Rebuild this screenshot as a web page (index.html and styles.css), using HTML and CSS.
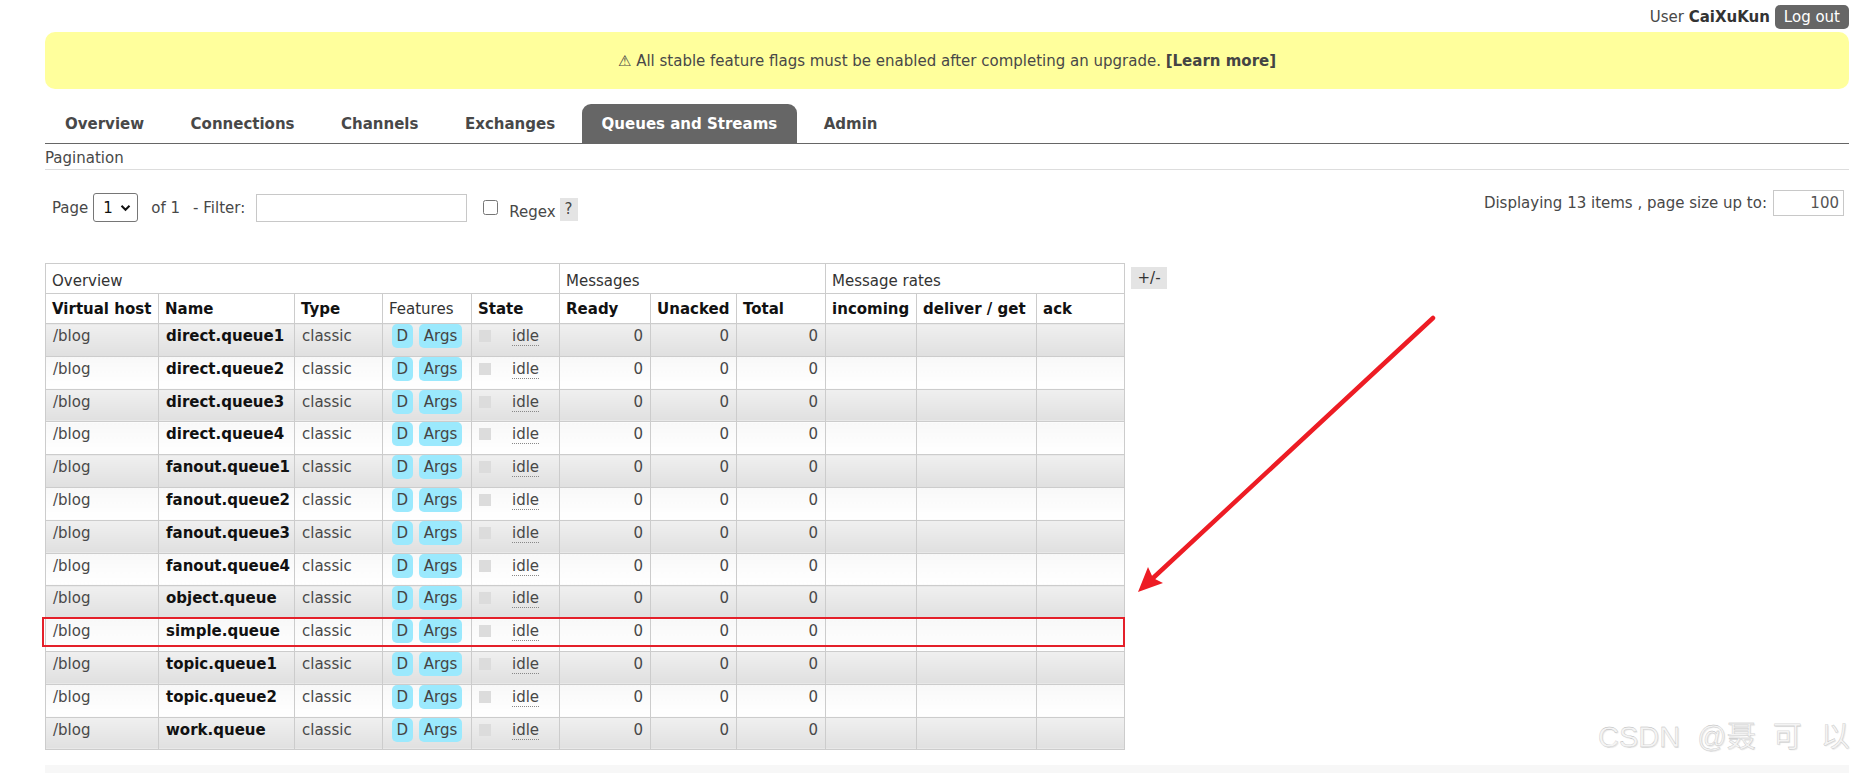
FILE: index.html
```html
<!DOCTYPE html>
<html>
<head>
<meta charset="utf-8">
<title>RabbitMQ Management</title>
<link rel="stylesheet" href="styles.css">
</head>
<body>
<div class="page">
  <div class="topbar">
    <span class="user">User <b>CaiXuKun</b></span>
    <span class="logout">Log out</span>
  </div>
  <div class="banner">⚠ All stable feature flags must be enabled after completing an upgrade.&nbsp;<b>[Learn more]</b></div>
  <ul class="tabs">
    <li>Overview</li>
    <li>Connections</li>
    <li>Channels</li>
    <li>Exchanges</li>
    <li class="selected">Queues and Streams</li>
    <li>Admin</li>
  </ul>
  <div class="section-title">Pagination</div>
  <div class="pager">
    <div class="pager-left">
      <span class="lbl-page">Page</span>
      <span class="select">1<svg class="chev" width="11" height="8" viewBox="0 0 11 8"><path d="M1.5 1.8 L5.5 5.8 L9.5 1.8" fill="none" stroke="#111" stroke-width="2"/></svg></span>
      <span class="lbl-of">of 1</span>
      <span class="lbl-filter">- Filter:</span>
      <input class="filter" type="text">
      <input class="cb" type="checkbox">
      <span class="regex">Regex <span class="help">?</span></span>
    </div>
    <div class="pager-right">
      <span>Displaying 13 items , page size up to:</span>
      <input class="size" type="text" value="100">
    </div>
  </div>
  <div class="table-wrap">
    <table class="list">
      <colgroup>
        <col class="w113"><col class="w136"><col class="w88"><col class="w89"><col class="w88">
        <col class="w91"><col class="w86"><col class="w89">
        <col class="w91"><col class="w120"><col class="w88">
      </colgroup>
      <thead>
        <tr class="group">
          <th colspan="5">Overview</th>
          <th colspan="3">Messages</th>
          <th colspan="3">Message rates</th>
        </tr>
        <tr class="cols">
          <th>Virtual host</th><th>Name</th><th>Type</th><th class="plain">Features</th><th>State</th>
          <th>Ready</th><th>Unacked</th><th>Total</th>
          <th>incoming</th><th>deliver / get</th><th>ack</th>
        </tr>
      </thead>
      <tbody>
        <tr class="alt1"><td>/blog</td><td class="name">direct.queue1</td><td>classic</td><td><span class="badge">D</span> <span class="badge">Args</span></td><td><span class="sq"></span><span class="idle">idle</span></td><td class="r">0</td><td class="r">0</td><td class="r">0</td><td></td><td></td><td></td></tr>
        <tr class="alt2"><td>/blog</td><td class="name">direct.queue2</td><td>classic</td><td><span class="badge">D</span> <span class="badge">Args</span></td><td><span class="sq"></span><span class="idle">idle</span></td><td class="r">0</td><td class="r">0</td><td class="r">0</td><td></td><td></td><td></td></tr>
        <tr class="alt1"><td>/blog</td><td class="name">direct.queue3</td><td>classic</td><td><span class="badge">D</span> <span class="badge">Args</span></td><td><span class="sq"></span><span class="idle">idle</span></td><td class="r">0</td><td class="r">0</td><td class="r">0</td><td></td><td></td><td></td></tr>
        <tr class="alt2"><td>/blog</td><td class="name">direct.queue4</td><td>classic</td><td><span class="badge">D</span> <span class="badge">Args</span></td><td><span class="sq"></span><span class="idle">idle</span></td><td class="r">0</td><td class="r">0</td><td class="r">0</td><td></td><td></td><td></td></tr>
        <tr class="alt1"><td>/blog</td><td class="name">fanout.queue1</td><td>classic</td><td><span class="badge">D</span> <span class="badge">Args</span></td><td><span class="sq"></span><span class="idle">idle</span></td><td class="r">0</td><td class="r">0</td><td class="r">0</td><td></td><td></td><td></td></tr>
        <tr class="alt2"><td>/blog</td><td class="name">fanout.queue2</td><td>classic</td><td><span class="badge">D</span> <span class="badge">Args</span></td><td><span class="sq"></span><span class="idle">idle</span></td><td class="r">0</td><td class="r">0</td><td class="r">0</td><td></td><td></td><td></td></tr>
        <tr class="alt1"><td>/blog</td><td class="name">fanout.queue3</td><td>classic</td><td><span class="badge">D</span> <span class="badge">Args</span></td><td><span class="sq"></span><span class="idle">idle</span></td><td class="r">0</td><td class="r">0</td><td class="r">0</td><td></td><td></td><td></td></tr>
        <tr class="alt2"><td>/blog</td><td class="name">fanout.queue4</td><td>classic</td><td><span class="badge">D</span> <span class="badge">Args</span></td><td><span class="sq"></span><span class="idle">idle</span></td><td class="r">0</td><td class="r">0</td><td class="r">0</td><td></td><td></td><td></td></tr>
        <tr class="alt1"><td>/blog</td><td class="name">object.queue</td><td>classic</td><td><span class="badge">D</span> <span class="badge">Args</span></td><td><span class="sq"></span><span class="idle">idle</span></td><td class="r">0</td><td class="r">0</td><td class="r">0</td><td></td><td></td><td></td></tr>
        <tr class="alt2"><td>/blog</td><td class="name">simple.queue</td><td>classic</td><td><span class="badge">D</span> <span class="badge">Args</span></td><td><span class="sq"></span><span class="idle">idle</span></td><td class="r">0</td><td class="r">0</td><td class="r">0</td><td></td><td></td><td></td></tr>
        <tr class="alt1"><td>/blog</td><td class="name">topic.queue1</td><td>classic</td><td><span class="badge">D</span> <span class="badge">Args</span></td><td><span class="sq"></span><span class="idle">idle</span></td><td class="r">0</td><td class="r">0</td><td class="r">0</td><td></td><td></td><td></td></tr>
        <tr class="alt2"><td>/blog</td><td class="name">topic.queue2</td><td>classic</td><td><span class="badge">D</span> <span class="badge">Args</span></td><td><span class="sq"></span><span class="idle">idle</span></td><td class="r">0</td><td class="r">0</td><td class="r">0</td><td></td><td></td><td></td></tr>
        <tr class="alt1"><td>/blog</td><td class="name">work.queue</td><td>classic</td><td><span class="badge">D</span> <span class="badge">Args</span></td><td><span class="sq"></span><span class="idle">idle</span></td><td class="r">0</td><td class="r">0</td><td class="r">0</td><td></td><td></td><td></td></tr>
      </tbody>
    </table>
    <span class="plus-minus">+/-</span>
    <div class="highlight"></div>
  </div>
  <div class="footer-band"></div>
  <svg class="arrow" width="1869" height="773" viewBox="0 0 1869 773">
    <line x1="1433" y1="318" x2="1152" y2="579" stroke="#ed1c24" stroke-width="4.5" stroke-linecap="round"/>
    <polygon points="1138,592 1148,567 1153,578 1163,583" fill="#ed1c24"/>
  </svg>
  <div class="watermark"><span>CSDN</span> <span>@聂</span> <span>可</span> <span class="wm-last">以</span></div>
</div>
</body>
</html>
```

FILE: styles.css
```css
* { box-sizing: border-box; }
html, body { margin: 0; padding: 0; background: #fff; }
body {
  font-family: "DejaVu Sans", Verdana, sans-serif;
  font-size: 15px;
  color: #484848;
  overflow: hidden;
}
.page {
  position: relative;
  padding: 0 20px 0 45px;
  height: 773px;
}

/* top bar */
.topbar {
  height: 32px;
  display: flex;
  justify-content: flex-end;
  align-items: center;
  gap: 5px;
  padding-top: 1px;
}
.user b { color: #333; }
.logout {
  background: #666;
  color: #fff;
  border-radius: 5px;
  height: 24px;
  line-height: 24px;
  padding: 0 9px;
}

/* banner */
.banner {
  height: 57px;
  background: #ffff9c;
  border-radius: 10px;
  display: flex;
  align-items: center;
  justify-content: center;
  padding-top: 1px;
}
.banner b { color: #444; }

/* tabs */
.tabs {
  list-style: none;
  margin: 15px 0 0 0;
  padding: 0;
  display: flex;
  border-bottom: 1px solid #666;
}
.tabs li {
  height: 39px;
  display: flex;
  align-items: center;
  padding: 0 19.5px 0 20px;
  margin-right: 7px;
  font-weight: bold;
  color: #484848;
  padding-top: 1px;
}
.tabs li.selected {
  background: #666;
  color: #fff;
  border-radius: 9px 9px 0 0;
}

.section-title {
  padding: 5px 0 2px 0;
  line-height: 18px;
  border-bottom: 1px solid #ddd;
}

/* pager */
.pager {
  display: flex;
  justify-content: space-between;
  align-items: flex-start;
}
.pager-left {
  margin-top: 23px;
  display: flex;
  align-items: center;
  height: 29px;
  padding-left: 7px;
}
.lbl-page { margin-right: 5px; }
.select {
  display: flex;
  align-items: center;
  justify-content: space-between;
  width: 45px;
  height: 29px;
  border: 1px solid #767676;
  border-radius: 3px;
  padding: 0 6px 0 9px;
  color: #111;
}
.chev { display: block; margin-top: 1px; }
.lbl-of { margin-left: 13px; }
.lbl-filter { margin-left: 13px; }
.filter {
  margin: 0 0 0 11px;
  width: 211px;
  height: 28px;
  border: 1px solid #c8c8c8;
  padding: 0 4px;
  font: inherit;
  outline: none;
}
.cb {
  margin: 0 0 0 16px;
  width: 15px;
  height: 15px;
}
.regex {
  margin-left: 11px;
  align-self: flex-end;
  display: flex;
  align-items: flex-end;
  gap: 4px;
  margin-bottom: 1px;
  line-height: 18px;
}
.help {
  display: inline-block;
  width: 18px;
  height: 23px;
  line-height: 23px;
  text-align: center;
  background: #e4e4e4;
  color: #444;
}
.pager-right {
  margin-top: 20px;
  display: flex;
  align-items: center;
  gap: 6px;
  margin-right: 5px;
}
.size {
  width: 71px;
  height: 26px;
  border: 1px solid #c8c8c8;
  text-align: right;
  padding: 0 4px;
  font: inherit;
  color: #555;
  outline: none;
}

/* table */
.table-wrap {
  position: relative;
  margin-top: 41px;
  display: flex;
  align-items: flex-start;
}
table.list {
  border-collapse: collapse;
  table-layout: fixed;
  width: 1079px;
}
.w113 { width: 113px; }
.w136 { width: 136px; }
.w88 { width: 88px; }
.w89 { width: 89px; }
.w91 { width: 91px; }
.w86 { width: 86px; }
.w120 { width: 120px; }
table.list th, table.list td {
  border: 1px solid #ccc;
  text-align: left;
  vertical-align: top;
  white-space: nowrap;
  overflow: hidden;
}
table.list th {
  padding: 7px 6px 5px 6px;
  line-height: 17px;
  background: #fff;
  color: #111;
}
table.list tr.group th {
  font-weight: normal;
  color: #333;
  padding: 9px 6px 3px 6px;
}
table.list th.plain { font-weight: normal; color: #333; }
table.list td {
  padding: 4px 7px 10px 7px;
  line-height: 17.8px;
}
table.list td.r { text-align: right; }
table.list td.name { font-weight: bold; color: #111; }
tr.alt1 td { background: linear-gradient(to bottom, #f0f0f0 0%, #e0e0e0 100%); }
tr.alt2 td { background: linear-gradient(to bottom, #f8f8f8 0%, #ffffff 100%); }

.badge {
  background: #9be9fd;
  border-radius: 5px;
  padding: 3px 4.5px;
  margin-left: 2px;
  color: #444;
}
.sq {
  display: inline-block;
  width: 12px;
  height: 12px;
  background: #dcdcdc;
  vertical-align: top;
  margin-top: 2px;
  margin-right: 21px;
}
.idle {
  border-bottom: 1px dotted #888;
}

.plus-minus {
  margin: 4px 0 0 6px;
  width: 36px;
  height: 22px;
  line-height: 22px;
  text-align: center;
  background: #e4e4e4;
  color: #333;
}
.highlight {
  position: absolute;
  left: -3px;
  top: 354px;
  width: 1083px;
  height: 30px;
  border: 2px solid #e4202a;
  pointer-events: none;
}

.footer-band {
  margin-top: 15px;
  height: 20px;
  background: #f7f7f7;
}

.arrow {
  position: absolute;
  left: 0;
  top: 0;
  pointer-events: none;
}
.watermark {
  position: absolute;
  left: 1598px;
  top: 720px;
  font-family: "Liberation Sans", "Noto Sans CJK SC", sans-serif;
  font-size: 29px;
  line-height: 34px;
  white-space: nowrap;
  word-spacing: 9px;
  color: #f4f4f4;
  -webkit-text-stroke: 0.3px #b8b8b8;
  text-shadow: 1px 1px 1px rgba(0,0,0,0.1);
}
.wm-last { margin-left: 2px; }
```
